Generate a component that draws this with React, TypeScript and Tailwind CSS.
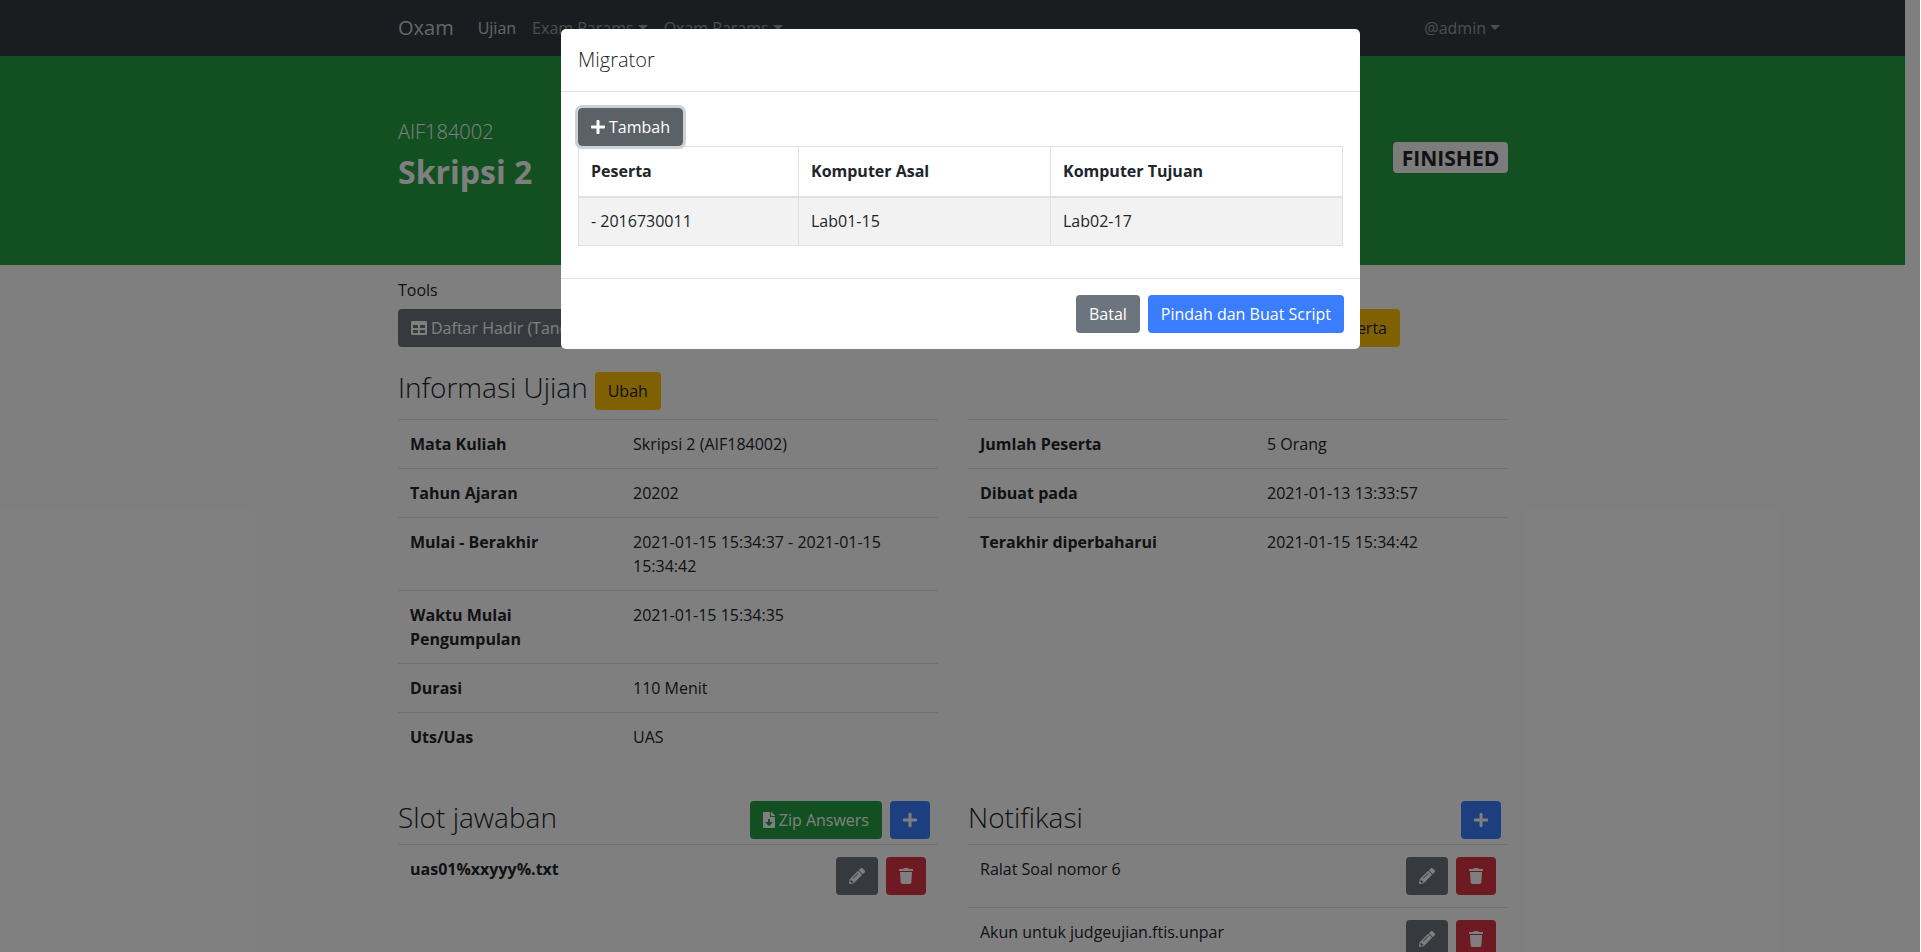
import { FaPlus, FaTable, FaPencilAlt, FaTrash, FaFileDownload } from "react-icons/fa";

const btn = "inline-flex items-center h-[38px] px-[13px] rounded-[4px] text-white whitespace-nowrap";

function Caret() {
  return <span className="ml-[4px] inline-block align-[4px] border-x-[5px] border-t-[5px] border-x-transparent border-t-current" />;
}

function NavBar() {
  return (
    <nav className="h-[56px] bg-[#343a40] flex items-center">
      <div className="ml-[398px] w-[1110px] flex items-center">
        <span className="text-[20px] text-white/75 mr-[16px]">Oxam</span>
        <span className="text-white/75 px-[8px]">Ujian</span>
        <span className="text-white/50 px-[8px]">
          Exam Params
          <Caret />
        </span>
        <span className="text-white/50 px-[8px]">
          Oxam Params
          <Caret />
        </span>
        <span className="text-white/50 ml-auto px-[8px]">
          @admin
          <Caret />
        </span>
      </div>
    </nav>
  );
}

function Jumbotron() {
  return (
    <div className="h-[209px] bg-[#25a042] flex">
      <div className="ml-[398px] w-[1110px] flex items-start justify-between text-white pt-[64px]">
        <div>
          <div className="text-[20px] font-light leading-[24px]">AIF184002</div>
          <div className="text-[32px] font-bold leading-[38px] mt-[9px]">Skripsi 2</div>
        </div>
        <span className="mt-[22px] h-[31px] w-[115px] flex items-center justify-center rounded-[4px] bg-[#f8f9fa] text-[#212529] text-[21px] font-bold">
          FINISHED
        </span>
      </div>
    </div>
  );
}

function InfoTable({ rows, labelWidth }: { rows: string[][]; labelWidth: string }) {
  return (
    <table className="w-[540px] table-fixed">
      <colgroup>
        <col className={labelWidth} />
        <col />
      </colgroup>
      <tbody>
        {rows.map(([k, v]) => (
          <tr key={k} className="border-t border-[#dee2e6] align-top">
            <td className="p-[12px] font-bold">{k}</td>
            <td className="p-[12px]">{v}</td>
          </tr>
        ))}
      </tbody>
    </table>
  );
}

function RowActions() {
  return (
    <div className="flex gap-[8px]">
      <span className={`${btn} bg-[#6c757d]`}>
        <FaPencilAlt className="w-[16px] h-[16px]" />
      </span>
      <span className={`${btn} bg-[#dc3545]`}>
        <FaTrash className="w-[14px] h-[16px]" />
      </span>
    </div>
  );
}

function Page() {
  return (
    <div className="w-[1905px] bg-white text-[#212529]">
      <NavBar />
      <Jumbotron />
      <div className="ml-[398px] w-[1110px]">
        <div className="pt-[13px] leading-[24px]">Tools</div>
        <div className="mt-[7px] w-[1002px] flex justify-between">
          <span className={`${btn} bg-[#6c757d] gap-[4px]`}>
            <FaTable className="w-[16px] h-[16px]" /> Daftar Hadir (Tanda Tangan)
          </span>
          <span className={`${btn} bg-[#ffc107] !text-[#212529]`}>Migrasi Peserta</span>
        </div>

        <div className="mt-[25px] flex items-start gap-[7px] h-[38px]">
          <h3 className="text-[28px] font-light leading-[34px] -mt-[2px]">Informasi Ujian</h3>
          <span className={`${btn} bg-[#ffc107] !text-[#212529]`}>Ubah</span>
        </div>
        <div className="mt-[9px] flex gap-[30px] items-start">
          <InfoTable
            labelWidth="w-[223px]"
            rows={[
              ["Mata Kuliah", "Skripsi 2 (AIF184002)"],
              ["Tahun Ajaran", "20202"],
              ["Mulai - Berakhir", "2021-01-15 15:34:37 - 2021-01-15 15:34:42"],
              ["Waktu Mulai Pengumpulan", "2021-01-15 15:34:35"],
              ["Durasi", "110 Menit"],
              ["Uts/Uas", "UAS"],
            ]}
          />
          <InfoTable
            labelWidth="w-[287px]"
            rows={[
              ["Jumlah Peserta", "5 Orang"],
              ["Dibuat pada", "2021-01-13 13:33:57"],
              ["Terakhir diperbaharui", "2021-01-15 15:34:42"],
            ]}
          />
        </div>

        <div className="mt-[40px] flex gap-[30px] items-start">
          <div className="w-[540px]">
            <div className="h-[43px] flex items-start justify-between pr-[8px]">
              <h3 className="text-[28px] font-light leading-[34px] -mt-[1px]">Slot jawaban</h3>
              <div className="flex gap-[8px]">
                <span className={`${btn} bg-[#25a042] gap-[4px]`}>
                  <FaFileDownload className="w-[12px] h-[16px]" /> Zip Answers
                </span>
                <span className={`${btn} bg-[#3b7dff]`}>
                  <FaPlus className="w-[14px] h-[16px]" />
                </span>
              </div>
            </div>
            <div className="border-t border-[#dee2e6] pt-[12px] px-[12px] flex justify-between h-[62px]">
              <span className="font-bold">uas01%xxyyy%.txt</span>
              <RowActions />
            </div>
          </div>
          <div className="w-[540px]">
            <div className="h-[43px] flex items-start justify-between pr-[7px]">
              <h3 className="text-[28px] font-light leading-[34px] -mt-[1px]">Notifikasi</h3>
              <span className={`${btn} bg-[#3b7dff]`}>
                <FaPlus className="w-[14px] h-[16px]" />
              </span>
            </div>
            <div className="border-t border-[#dee2e6] pt-[12px] px-[12px] flex justify-between h-[63px]">
              <span>Ralat Soal nomor 6</span>
              <RowActions />
            </div>
            <div className="border-t border-[#dee2e6] pt-[12px] px-[12px] flex justify-between h-[63px]">
              <span>Akun untuk judgeujian.ftis.unpar</span>
              <RowActions />
            </div>
          </div>
        </div>
      </div>
    </div>
  );
}

function MigratorModal() {
  return (
    <div className="absolute left-[561px] top-[29px] w-[799px] h-[320px] bg-white rounded-[5px] text-[#212529]">
      <div className="h-[63px] border-b border-[#dee2e6] flex items-center px-[17px]">
        <h5 className="text-[20px] font-light">Migrator</h5>
      </div>
      <div className="h-[186px] px-[17px] pt-[16px]">
        <span className={`${btn} bg-[#5a6268] outline-[3px] outline-solid outline-[#ced1d4] gap-[4px]`}>
          <FaPlus className="w-[14px] h-[16px]" /> Tambah
        </span>
        <table className="w-[765px] table-fixed border border-[#dee2e6]">
          <colgroup>
            <col className="w-[220px]" />
            <col className="w-[252px]" />
            <col />
          </colgroup>
          <thead>
            <tr className="text-left border-b-2 border-[#dee2e6]">
              <th className="px-[12px] h-[50px] border-r border-[#dee2e6] font-bold">Peserta</th>
              <th className="px-[12px] h-[50px] border-r border-[#dee2e6] font-bold">Komputer Asal</th>
              <th className="px-[12px] h-[50px] font-bold">Komputer Tujuan</th>
            </tr>
          </thead>
          <tbody>
            <tr className="bg-[#f2f2f2]">
              <td className="px-[12px] h-[49px] border-r border-[#dee2e6]">- 2016730011</td>
              <td className="px-[12px] h-[49px] border-r border-[#dee2e6]">Lab01-15</td>
              <td className="px-[12px] h-[49px]">Lab02-17</td>
            </tr>
          </tbody>
        </table>
      </div>
      <div className="border-t border-[#dee2e6] pt-[16px] px-[16px] flex justify-end gap-[8px]">
        <span className={`${btn} bg-[#6c757d]`}>Batal</span>
        <span className={`${btn} bg-[#3b7dff]`}>Pindah dan Buat Script</span>
      </div>
    </div>
  );
}

export default function App() {
  return (
    <div className="relative h-[952px] overflow-hidden bg-white font-['Open_Sans',sans-serif] text-[16px] leading-[24px]">
      <Page />
      {/* modal backdrop, stops one pixel short of the window edge */}
      <div className="absolute left-0 top-0 w-[1920px] h-[952px] bg-black/50" />
      <MigratorModal />
    </div>
  );
}
